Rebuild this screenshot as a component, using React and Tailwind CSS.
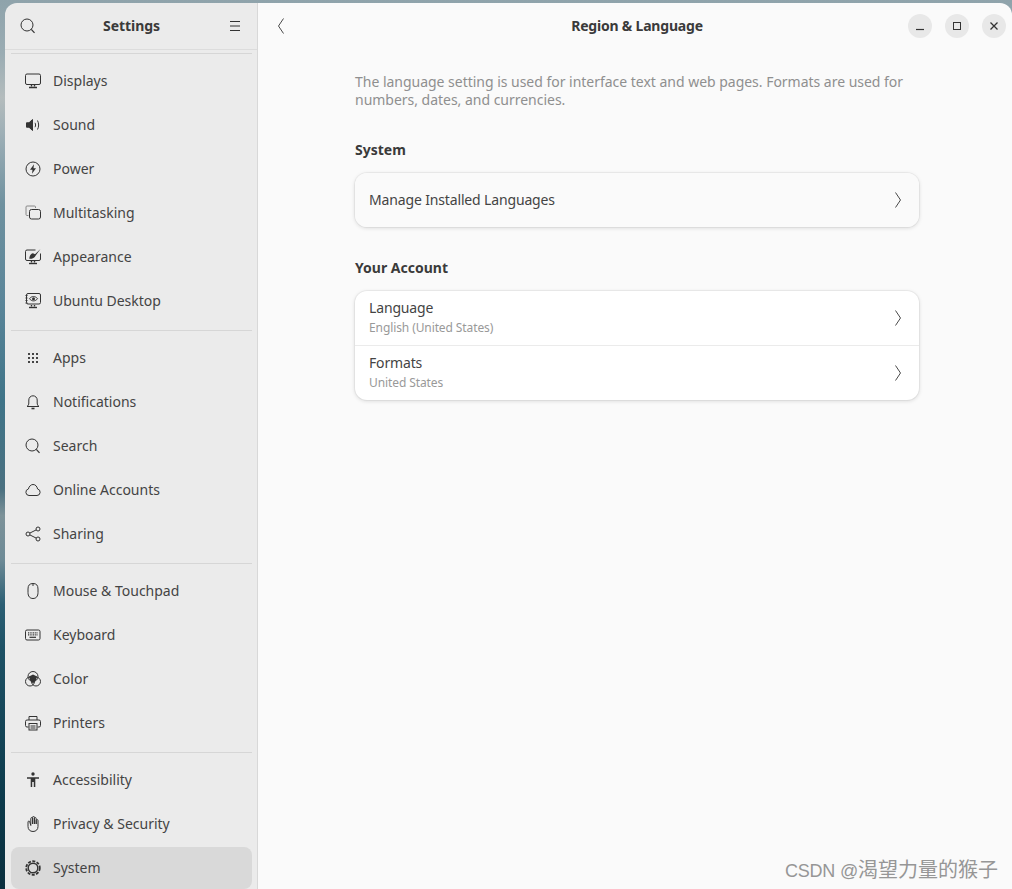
function Ic({ children }) {
  return (
    <svg width="16" height="16" viewBox="0 0 16 16" fill="none" stroke="#333" strokeWidth="1" className="shrink-0">
      {children}
    </svg>
  );
}

const icons = {
  displays: (
    <Ic>
      <rect x="0.5" y="1" width="15" height="10.5" rx="1.5" />
      <path d="M6.5 12v1.5M9.5 12v1.5" strokeWidth="1.4" />
      <path d="M4 14.5h8" strokeWidth="1.4" />
    </Ic>
  ),
  sound: (
    <Ic>
      <path d="M1.500 5.800h2.500L7.500 2.500v11L4 10.200H1.500z" fill="#333" />
      <path d="M10 5.800c.8 1.400.8 3 0 4.400M12.500 3.500c1.500 2.800 1.500 6.200 0 9" />
    </Ic>
  ),
  power: (
    <Ic>
      <circle cx="8" cy="8" r="7" />
      <path d="M9 3.200 5 8.800h2.500L7 12.800l4-5.600H8.500z" fill="#333" stroke="none" />
    </Ic>
  ),
  multitasking: (
    <Ic>
      <path d="M3.500 10.500H2a1 1 0 0 1-1-1V2a1 1 0 0 1 1-1h7.500a1 1 0 0 1 1 1v1" stroke="#888" />
      <rect x="4.500" y="4.500" width="11" height="9.500" rx="2" />
    </Ic>
  ),
  appearance: (
    <Ic>
      <path d="M10.500 1H2a1.500 1.500 0 0 0-1.500 1.500v7.500A1.500 1.500 0 0 0 2 11.500h12a1.500 1.500 0 0 0 1.500-1.500V4.500" />
      <path d="M15.500 0 10 5.300 8 4.300C5.500 4.800 4.500 7 4.300 9.800 7 10 9.700 9 10.700 6.500z" fill="#333" stroke="none" />
      <path d="M6.500 12v1.500M9.500 12v1.500" strokeWidth="1.400" />
      <path d="M4 14.500h8" strokeWidth="1.400" />
    </Ic>
  ),
  ubuntu: (
    <Ic>
      <rect x="1.500" y="0.500" width="14" height="10.500" rx="1.500" />
      <path d="M0.500 2.500h2M0.500 5h2M0.500 7.500h2M0.500 10h2" strokeWidth="1.200" />
      <path d="M4.500 5.700C6.500 2.800 10.500 2.800 12.500 5.700 10.500 8.600 6.500 8.600 4.500 5.700z" />
      <circle cx="8.500" cy="5.700" r="1.500" fill="#333" stroke="none" />
      <path d="M6.500 12v1.500M9.500 12v1.500" strokeWidth="1.400" />
      <path d="M4 14.500h8" strokeWidth="1.400" />
    </Ic>
  ),
  apps: (
    <Ic>
      {[4, 8, 12].flatMap((y) =>
        [4, 8, 12].map((x) => <rect key={`${x}-${y}`} x={x - 1} y={y - 1} width="2" height="2" fill="#444" stroke="none" />)
      )}
    </Ic>
  ),
  bell: (
    <Ic>
      <path d="M2 12.500c1.200-.8 1.800-1.800 1.800-3.500V6A4.200 4.200 0 0 1 12.200 6v3c0 1.700.6 2.700 1.800 3.500z" />
      <path d="M6.500 14.500h3" strokeWidth="1.600" />
    </Ic>
  ),
  search: (
    <Ic>
      <circle cx="7" cy="7" r="6" />
      <path d="M11.300 11.300 14.500 14.800" strokeWidth="1.200" />
    </Ic>
  ),
  cloud: (
    <Ic>
      <path d="M4 13.500a3.300 3.300 0 0 1-.6-6.500C4 4.300 6 2.500 8 2.500c2.500 0 4 1.900 4.600 4.500A3.300 3.300 0 0 1 12 13.500z" />
    </Ic>
  ),
  sharing: (
    <Ic>
      <circle cx="3" cy="8" r="2" />
      <circle cx="13" cy="3" r="2" />
      <circle cx="13" cy="13" r="2" />
      <path d="M4.800 7.100 11.200 3.900M4.800 8.900l6.400 3.200" />
    </Ic>
  ),
  mouse: (
    <Ic>
      <path d="M8 .5c3.500 0 5 1.800 5 5.500v3.500c0 3.800-1.800 6-5 6s-5-2.200-5-6V6C3 2.300 4.500.5 8 .5z" />
      <path d="M8 .5v2.500" />
    </Ic>
  ),
  keyboard: (
    <Ic>
      <rect x="0.500" y="3" width="14.500" height="10" rx="1.500" />
      <path d="M3 5.800h9.500M3 7.800h9.500" strokeDasharray="1 0.700" strokeWidth="1.200" />
      <path d="M4.500 10.300h6.500" strokeWidth="1.200" />
    </Ic>
  ),
  color: (
    <Ic>
      <circle cx="8" cy="5.500" r="5" />
      <circle cx="5" cy="10.500" r="4.500" />
      <circle cx="11" cy="10.500" r="4.500" />
      <path d="M4 5.500 8 3.500l4 2-1 3.500-3 3.500L5 9z" fill="#333" stroke="none" />
    </Ic>
  ),
  printer: (
    <Ic>
      <path d="M4 5V1.500h8V5" />
      <path d="M3.500 12H2a1.500 1.500 0 0 1-1.500-1.500V6.500A1.500 1.500 0 0 1 2 5h12a1.500 1.500 0 0 1 1.500 1.500v4A1.500 1.500 0 0 1 14 12h-1.500" />
      <rect x="4" y="8.500" width="8" height="6.500" />
      <path d="M5.500 11h5M5.500 13h5" />
    </Ic>
  ),
  accessibility: (
    <Ic>
      <circle cx="8" cy="2" r="1.700" fill="#333" stroke="none" />
      <path d="M2 5.300h12v1.400h-3.700V15H8.800v-5H7.200v5H5.700V6.700H2z" fill="#333" stroke="none" />
    </Ic>
  ),
  hand: (
    <Ic>
      <path d="M3 6v4.500c0 3 2 5 5 5s5-2 5-5V4.500a.9.9 0 0 0-1.800 0V8V2.500a.9.9 0 0 0-1.800 0V8V1.300a.9.9 0 0 0-1.800 0V8V2.500a.9.9 0 0 0-1.800 0V9.500L4.800 6a.9.900 0 0 0-1.800 0z" />
    </Ic>
  ),
  system: (
    <Ic>
      <circle cx="8" cy="8" r="4.800" strokeWidth="1.400" />
      <circle cx="8" cy="8" r="6.800" strokeWidth="1.800" strokeDasharray="3 1.450" />
    </Ic>
  ),
};

const groups = [
  [
    ["displays", "Displays"],
    ["sound", "Sound"],
    ["power", "Power"],
    ["multitasking", "Multitasking"],
    ["appearance", "Appearance"],
    ["ubuntu", "Ubuntu Desktop"],
  ],
  [
    ["apps", "Apps"],
    ["bell", "Notifications"],
    ["search", "Search"],
    ["cloud", "Online Accounts"],
    ["sharing", "Sharing"],
  ],
  [
    ["mouse", "Mouse & Touchpad"],
    ["keyboard", "Keyboard"],
    ["color", "Color"],
    ["printer", "Printers"],
  ],
  [
    ["accessibility", "Accessibility"],
    ["hand", "Privacy & Security"],
    ["system", "System"],
  ],
];

function Chevron({ back }) {
  return (
    <svg width="8" height="16" viewBox="0 0 8 16" fill="none" stroke="#4a4a4a" strokeWidth="1" className="shrink-0">
      <path d={back ? "M6.500.5 1.500 8l5 7.500" : "M1.500.5l5 7.500-5 7.500"} />
    </svg>
  );
}

function Row({ title, sub, tint }) {
  return (
    <div className={`h-[54px] pl-[14px] pr-[17px] flex items-center justify-between ${tint ? "bg-[#fafafa]" : ""}`}>
      <div className="pb-px">
        <div className="text-[14px] tracking-[-0.15px] leading-[18px] text-[#444]">{title}</div>
        {sub && <div className="text-[12px] tracking-[-0.1px] leading-[16px] mt-[3px] text-[#999]">{sub}</div>}
      </div>
      <Chevron />
    </div>
  );
}

function WinBtn({ children }) {
  return (
    <div className="w-6 h-6 rounded-full bg-[#e8e8e8] flex items-center justify-center">
      <svg width="16" height="16" viewBox="0 0 16 16" fill="none" stroke="#333" strokeWidth="1">
        {children}
      </svg>
    </div>
  );
}

export default function App() {
  return (
    <div className="relative w-[1012px] h-[889px] overflow-hidden pt-[3px] pl-[5px] bg-[linear-gradient(180deg,#8fa3ab_0%,#9aacb3_6%,#b4bcbd_11%,#9eafb6_15%,#6f919f_23%,#5a8599_34%,#3f7488_45%,#4a7080_55%,#7d9299_58%,#6d8a96_63%,#2c5f74_68%,#1d5165_73%,#0c3a4b_90%,#0a2f3e_100%)] font-['Noto_Sans',sans-serif] text-[#3d3d3d] flex">
      {/* Sidebar */}
      <aside className="w-[253px] shrink-0 bg-[#ebebeb] border-r border-[#d8d8d8] rounded-tl-xl overflow-hidden flex flex-col">
        <div className="h-[47px] shrink-0 border-b border-[#dcdcdc] flex items-center justify-between pl-[15px] pr-[14px]">
          <svg width="16" height="16" viewBox="0 0 16 16" fill="none" stroke="#333">
            <circle cx="7" cy="7" r="6" />
            <path d="M11.300 11.300 14.500 14.800" strokeWidth="1.200" />
          </svg>
          <span className="pb-[2px] text-[14px] font-bold tracking-[-0.05px] text-[#3a3a3a]">Settings</span>
          <svg width="16" height="16" viewBox="0 0 16 16" fill="none" stroke="#333">
            <path d="M3 3.500h10M3 8h10M3 12.500h10" />
          </svg>
        </div>
        <div className="mt-[3px] ml-[6px] mr-[5px] h-px bg-[#d6d6d6] shrink-0" />
        <div className="mt-[5px] pl-[6px] pr-[5px]">
          {groups.map((items, i) => (
            <div key={i}>
              {i > 0 && <div className="h-px bg-[#d6d6d6] mt-[7px] mb-[5px]" />}
              {items.map(([icon, label]) => (
                <div key={label} className="h-[44px] py-px">
                  <div className={`h-full rounded-lg flex items-center gap-[12px] pl-[14px] ${label === "System" ? "bg-[#d9d9d9]" : ""}`}>
                    {icons[icon]}
                    <span className="pb-[2px] text-[14px] text-[#444]">{label}</span>
                  </div>
                </div>
              ))}
            </div>
          ))}
        </div>
      </aside>

      {/* Main */}
      <main className="flex-1 bg-[#fafafa] rounded-tr-xl">
        <header className="h-[46px] flex items-center pl-[19px] pr-[6px]">
          <Chevron back />
          <span className="pb-[2px] flex-1 text-center text-[14px] font-bold tracking-[-0.2px] text-[#3a3a3a] ml-[81px]">Region &amp; Language</span>
          <div className="flex items-center gap-[13px]">
            <WinBtn>
              <path d="M4 11.500h8" strokeWidth="1.200" />
            </WinBtn>
            <WinBtn>
              <rect x="4.500" y="4.500" width="7" height="7" />
            </WinBtn>
            <WinBtn>
              <path d="M4.500 4.500l7 7M11.500 4.500l-7 7" strokeWidth="1.300" />
            </WinBtn>
          </div>
        </header>

        <div className="w-[564px] ml-[97px] mt-[24px]">
          <p className="text-[14px] tracking-[-0.02px] leading-[18px] text-[#8f8f8f]">
            The language setting is used for interface text and web pages. Formats are used for numbers, dates, and currencies.
          </p>

          <h2 className="mt-[32px] text-[14px] leading-[18px] font-bold text-[#3a3a3a]">System</h2>
          <div className="mt-[14px] rounded-xl overflow-hidden shadow-[0_0_0_1px_rgba(0,0,0,0.04),0_1px_4px_rgba(0,0,0,0.14)]">
            <Row title="Manage Installed Languages" tint />
          </div>

          <h2 className="mt-[32px] text-[14px] leading-[18px] font-bold text-[#3a3a3a]">Your Account</h2>
          <div className="mt-[14px] rounded-xl overflow-hidden bg-white shadow-[0_0_0_1px_rgba(0,0,0,0.04),0_1px_4px_rgba(0,0,0,0.14)]">
            <Row title="Language" sub="English (United States)" />
            <div className="h-px bg-[#ebebeb]" />
            <Row title="Formats" sub="United States" />
          </div>
        </div>
      </main>

      {/* Watermark */}
      <div className="absolute right-[14px] bottom-[4px] text-[20px] leading-[28px] text-[#969696] font-['Liberation_Sans','Noto_Sans_CJK_SC',sans-serif]">
        <span className="text-[18px] tracking-[-0.2px]">CSDN @</span>渴望力量的猴子
      </div>
    </div>
  );
}
